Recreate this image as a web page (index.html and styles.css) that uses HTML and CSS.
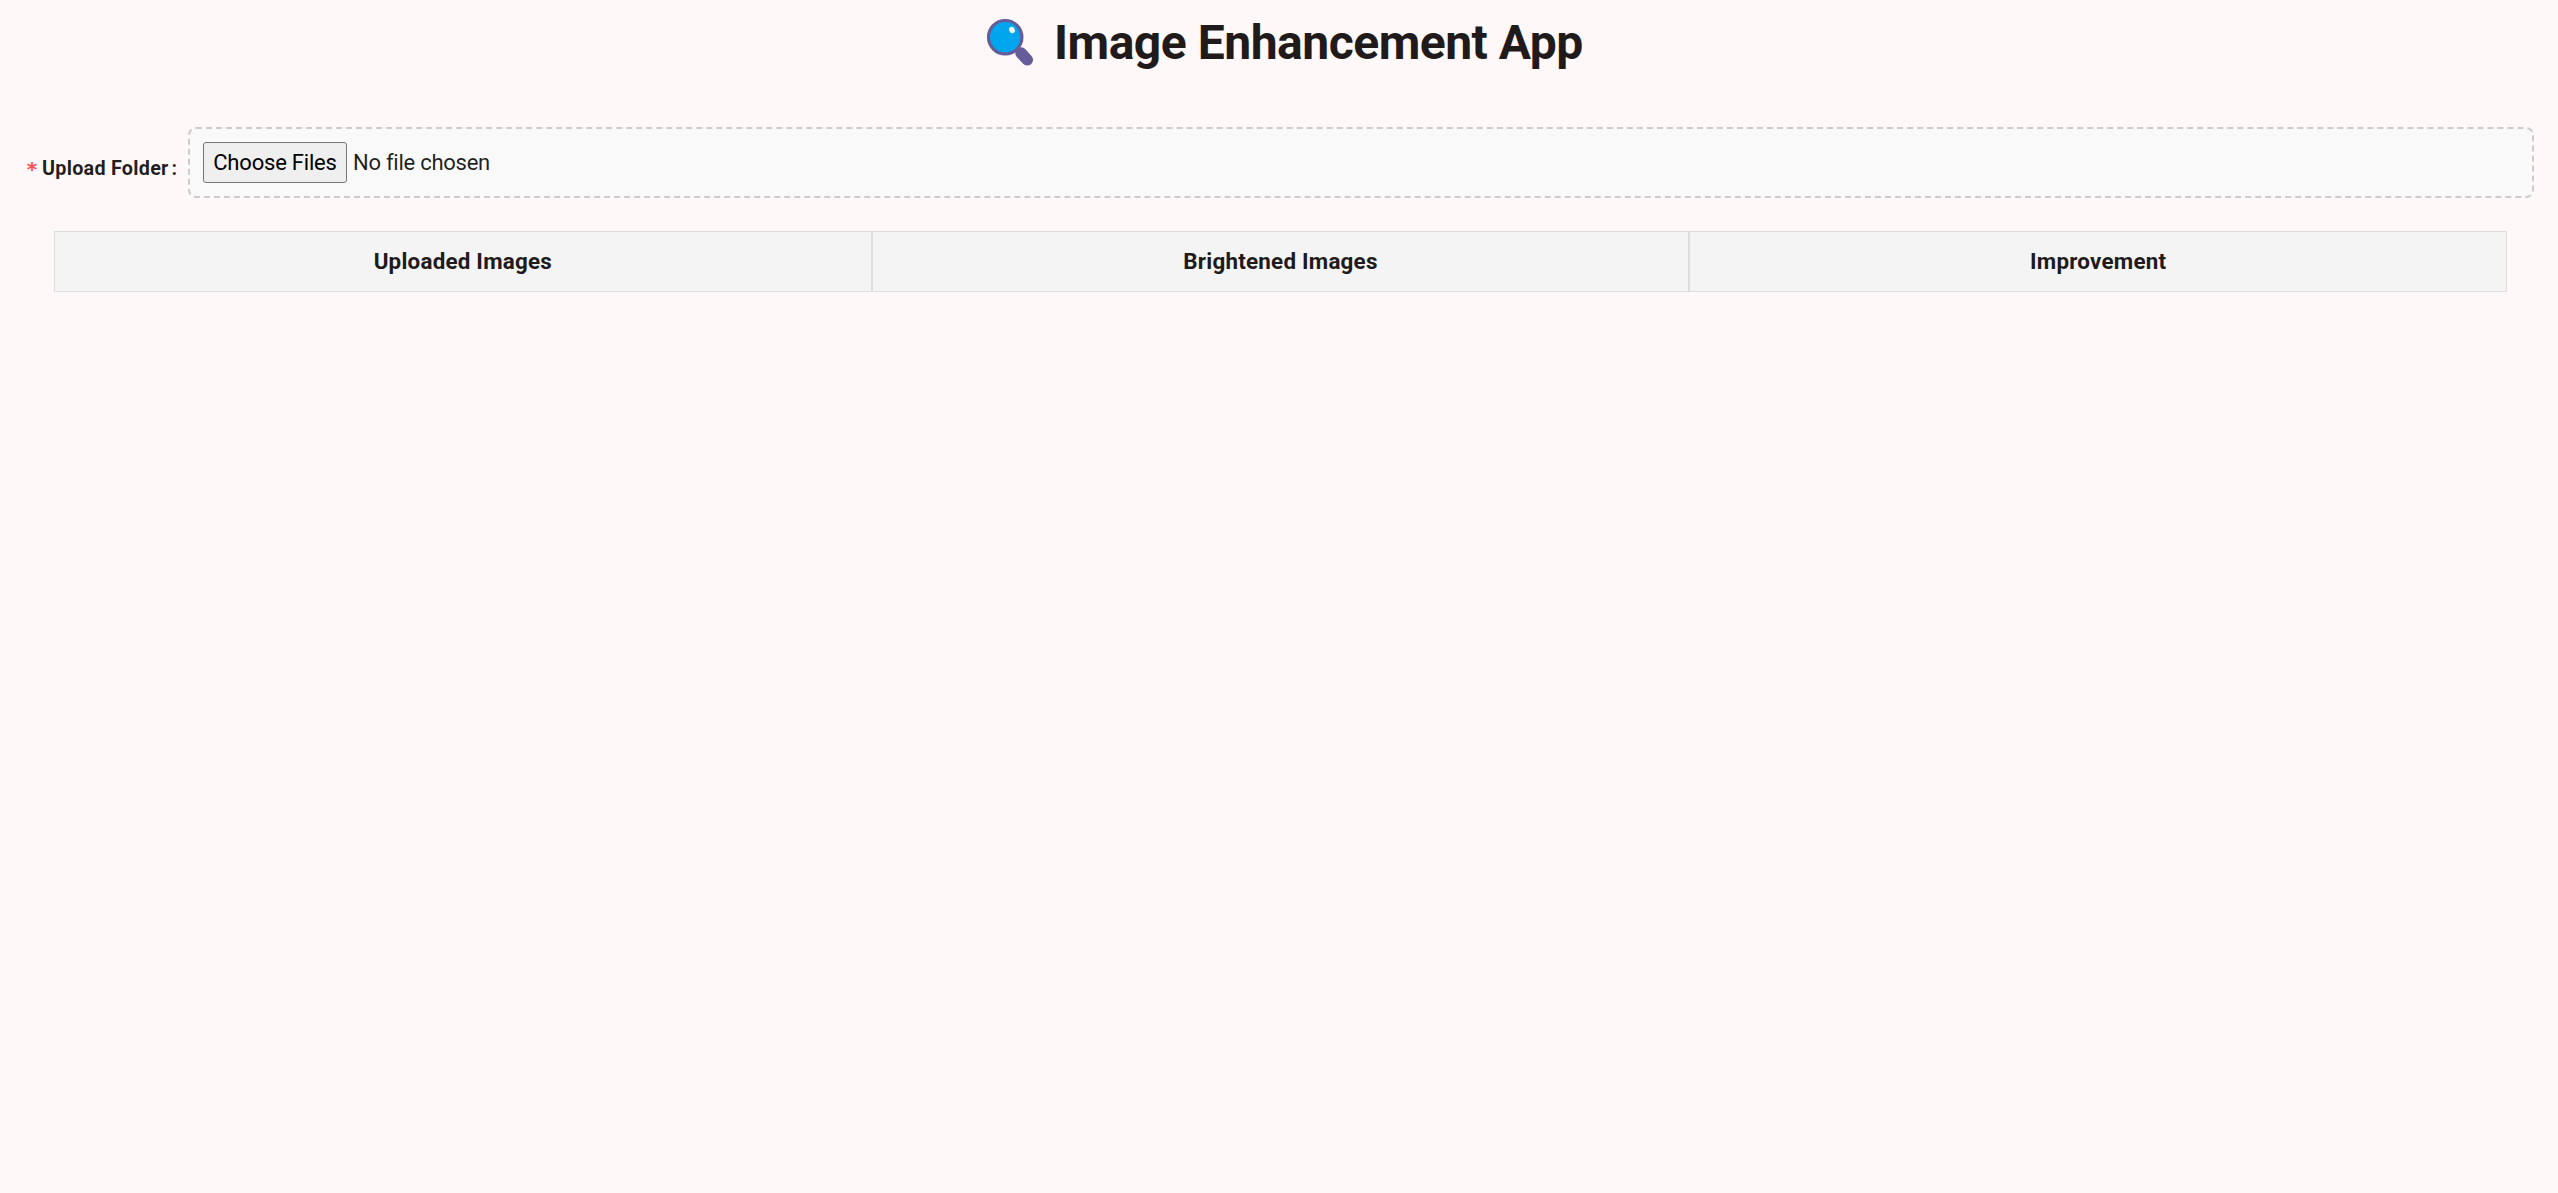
FILE: index.html
```html
<!DOCTYPE html>
<html lang="en">
<head>
<meta charset="utf-8">
<title>Image Enhancement App</title>
<link rel="stylesheet" href="styles.css">
</head>
<body>
<header class="header">
  <svg class="header-icon" viewBox="0 0 49 49" aria-hidden="true">
    <path d="M29 29 36 36" stroke="#655c99" stroke-width="4"/>
    <path d="M35 35 41.3 41.8" stroke="#655c99" stroke-width="11.5" stroke-linecap="round"/>
    <circle cx="19.2" cy="19.2" r="16.7" fill="#00a6ed" stroke="#655c99" stroke-width="3.2"/>
    <ellipse cx="26" cy="12" rx="2.7" ry="3.3" fill="#fff" transform="rotate(-25 26 12)"/>
  </svg>
  <h1 class="title">Image Enhancement App</h1>
</header>
<main>
  <form class="upload">
    <label class="upload-label" for="files"><span class="required">*</span><span class="label-text">Upload Folder</span><span class="colon">:</span></label>
    <div class="dropzone"><input class="file-input" id="files" type="file" multiple></div>
  </form>
  <div class="columns">
    <div class="column-head">Uploaded Images</div>
    <div class="column-head">Brightened Images</div>
    <div class="column-head">Improvement</div>
  </div>
</main>
</body>
</html>
```
FILE: styles.css
```css
* { box-sizing: border-box; }
body {
  margin: 0;
  min-height: 1193px;
  background: #fff8f8;
  color: #201a1b;
  font-family: Roboto, sans-serif;
}
.header {
  display: flex;
  height: 127px;
  padding: 18px 0 0 986px;
}
.header-icon { width: 49px; height: 49px; }
.title {
  margin: -4px 0 0 19px;
  font-size: 48px;
  line-height: 58px;
  font-weight: 700;
  letter-spacing: -.48px;
  white-space: nowrap;
}
.upload { display: flex; height: 71px; padding-right: 24px; }
.upload-label {
  display: flex;
  width: 188px;
  padding: 30px 0 0 26px;
  font-size: 19.8px;
  line-height: 24px;
  font-weight: 700;
  color: rgba(0, 0, 0, .88);
  white-space: nowrap;
}
.required {
  width: 16px;
  color: #ff4d4f;
  font: bold 20px/25px "DejaVu Sans Mono", monospace;
}
.label-text { letter-spacing: .25px; }
.colon { margin-left: 3px; }
.dropzone {
  flex: 1;
  padding: 13px;
  background: #f9f9f9;
  border: 2px dashed #ccc;
  border-radius: 8px;
}
.file-input {
  display: block;
  width: 100%;
  height: 42px;
  font: 22px/34px Roboto, sans-serif;
  letter-spacing: -.25px;
  color: rgba(0, 0, 0, .88);
}
.file-input::file-selector-button {
  width: 144px;
  height: 41px;
  margin: 0 6px 0 0;
  padding: 0 0 1px;
  border: 1px solid #767676;
  border-radius: 3px;
  background: #efefef;
  color: #000;
  font: 22px Roboto, sans-serif;
  letter-spacing: -.2px;
}
.columns {
  display: grid;
  grid-template-columns: repeat(3, 1fr);
  margin: 33px 51px 0 54px;
}
.column-head {
  height: 61px;
  border: 1px solid #ddd;
  background: #f4f4f4;
  text-align: center;
  font-size: 22.4px;
  line-height: 59px;
  font-weight: 700;
  letter-spacing: .22px;
}
```
